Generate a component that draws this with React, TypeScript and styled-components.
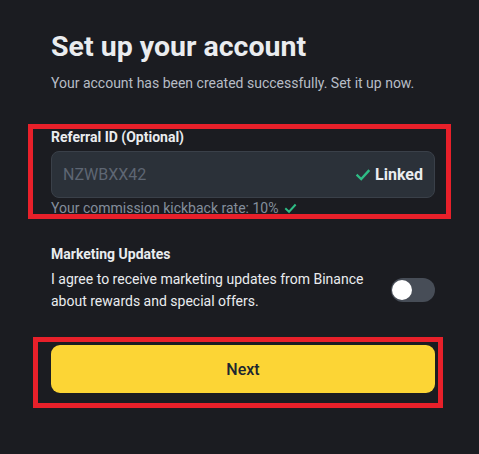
import React from 'react'
import styled, { createGlobalStyle } from 'styled-components'

const GlobalStyle = createGlobalStyle`
  html, body {
    margin: 0;
    padding: 0;
    background: #1b1c21;
  }
  body {
    font-family: Roboto, "Noto Sans", sans-serif;
    color: #eaecef;
  }
`

export const Page = styled.main`
  width: 479px;
  height: 454px;
  box-sizing: border-box;
  padding: 29px 44px 0 51px;
  background: #1b1c21;
  overflow: hidden;
`

export const Title = styled.h1`
  margin: 0;
  font-size: 28.5px;
  line-height: 36px;
  font-weight: 700;
  color: #eaecef;
`

export const Subtitle = styled.p`
  margin: 8px 0 0;
  font-size: 14px;
  line-height: 20px;
  color: #b7bdc6;
`

export const Section = styled.section<{ $top: number }>`
  position: relative;
  margin-top: ${(p) => p.$top}px;
`

export const Highlight = styled.div<{ $t: number; $r: number; $b: number; $l: number }>`
  position: absolute;
  top: ${(p) => p.$t}px;
  right: ${(p) => p.$r}px;
  bottom: ${(p) => p.$b}px;
  left: ${(p) => p.$l}px;
  border: 5px solid #e8202a;
  pointer-events: none;
`

export const Label = styled.div`
  font-size: 14px;
  line-height: 20px;
  font-weight: 700;
  color: #eaecef;
`

export const InputBox = styled.div`
  margin-top: 4px;
  height: 47px;
  box-sizing: border-box;
  display: flex;
  align-items: center;
  justify-content: space-between;
  padding: 0 11px 0 11px;
  background: #2b3139;
  border: 1px solid #3a4049;
  border-radius: 8px;
`

export const InputValue = styled.span`
  font-size: 16px;
  color: #5e6673;
`

export const Status = styled.span`
  display: flex;
  align-items: center;
  gap: 4px;
  font-size: 16px;
  font-weight: 700;
  color: #eaecef;
`

export const Hint = styled.div`
  display: flex;
  align-items: center;
  gap: 6px;
  font-size: 14px;
  line-height: 20px;
  color: #848e9c;
`

export const ToggleRow = styled.div`
  margin-top: 4px;
  display: flex;
  align-items: center;
  justify-content: space-between;
  gap: 16px;
`

export const Body = styled.p`
  margin: 0;
  max-width: 320px;
  font-size: 14px;
  line-height: 22px;
  color: #eaecef;
`

export const Switch = styled.div<{ $on: boolean }>`
  flex: none;
  width: 44px;
  height: 24px;
  box-sizing: border-box;
  padding: 2px 1px;
  border-radius: 12px;
  background: ${(p) => (p.$on ? '#fcd535' : '#474d57')};
  display: flex;
  justify-content: ${(p) => (p.$on ? 'flex-end' : 'flex-start')};
`

export const Knob = styled.span`
  width: 20px;
  height: 20px;
  border-radius: 50%;
  background: #ffffff;
`

export const Button = styled.button`
  display: block;
  width: 100%;
  height: 48px;
  border: none;
  border-radius: 9px;
  background: #fcd535;
  color: #202630;
  font-family: Roboto, "Noto Sans", sans-serif;
  font-size: 16px;
  font-weight: 500;
  cursor: pointer;
`

const Check = ({ size }: { size: number }) => (
  <svg width={size} height={size} viewBox="0 0 16 16" fill="none">
    <path d="M2.5 8.5 L6.2 12 L13.5 4" stroke="#2ebd85" strokeWidth="2.4" strokeLinecap="square" />
  </svg>
)

export default function App() {
  return (
    <React.Fragment>
      <GlobalStyle />
      <Page>
        <Title>Set up your account</Title>
        <Subtitle>Your account has been created successfully. Set it up now.</Subtitle>

        <Section $top={34}>
          <Label>Referral ID (Optional)</Label>
          <InputBox>
            <InputValue>NZWBXX42</InputValue>
            <Status>
              <Check size={16} />
              Linked
            </Status>
          </InputBox>
          <Hint>
            Your commission kickback rate: 10%
            <Check size={13} />
          </Hint>
          <Highlight $t={-3} $r={-16} $b={-1} $l={-23} />
        </Section>

        <Section $top={26}>
          <Label>Marketing Updates</Label>
          <ToggleRow>
            <Body>I agree to receive marketing updates from Binance about rewards and special offers.</Body>
            <Switch $on={false}>
              <Knob />
            </Switch>
          </ToggleRow>
        </Section>

        <Section $top={33}>
          <Button>Next</Button>
          <Highlight $t={-8} $r={-8} $b={-15} $l={-18} />
        </Section>
      </Page>
    </React.Fragment>
  )
}
